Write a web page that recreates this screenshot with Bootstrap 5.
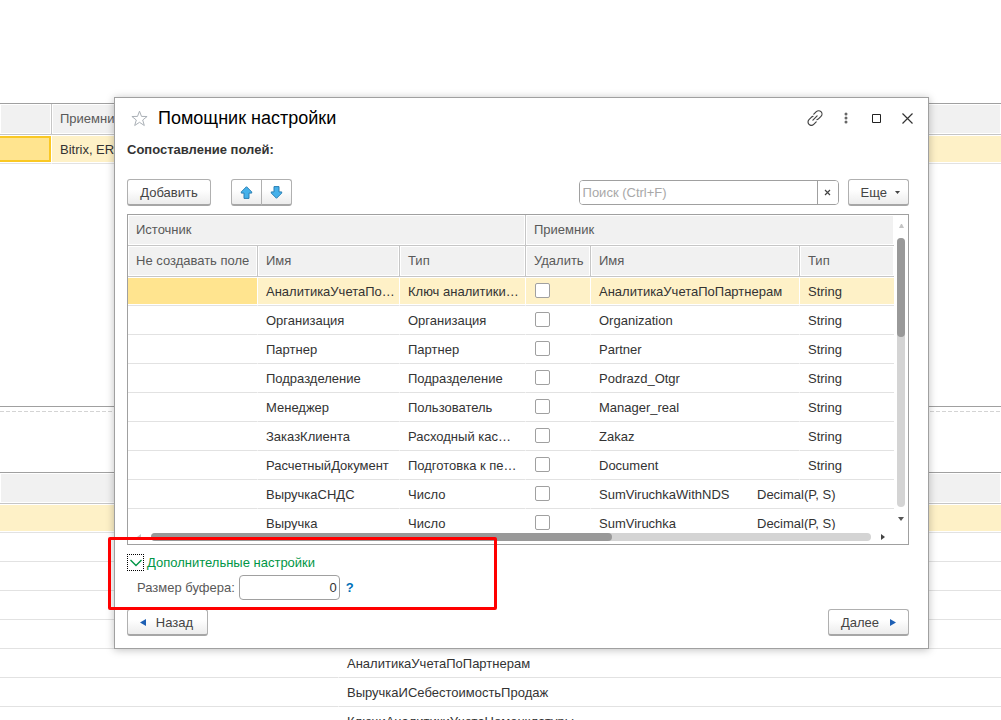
<!DOCTYPE html>
<html lang="ru">
<head>
<meta charset="utf-8">
<meta name="viewport" content="width=device-width, initial-scale=1">
<title>Помощник настройки</title>
<link href="https://cdn.jsdelivr.net/npm/bootstrap@5.3.0/dist/css/bootstrap.min.css" rel="stylesheet">
<style>
  body { font: 13px/16px "Liberation Sans", Arial, sans-serif; color: #333; background: #fff; }
  .desk { padding-top: 103px; }
  .pane { border-top: 1px solid #a0a0a0; }
  .pane-upper { height: 304px; border-bottom: 1px solid #a0a0a0; }
  .splitter { height: 65px; padding-top: 4px; }
  .splitter-line { height: 1px; background: repeating-linear-gradient(90deg, #d4d4d4 0 4px, #fff 4px 6px); }

  /* data grids */
  .grid { width: 100%; table-layout: fixed; border-collapse: separate; border-spacing: 0; }
  .grid th, .grid td { padding: 0 4px 0 8px; white-space: nowrap; overflow: hidden; text-overflow: ellipsis; vertical-align: middle; }
  .grid th { height: 31px; padding-right: 0; font-weight: 400; color: #595959; background: #f1f1f1; border-right: 1px solid #c6c6c6; border-bottom: 1px solid #c6c6c6; box-shadow: inset 0 0 0 1px #fff; }
  .grid td { height: 29px; padding-top: 2px; padding-right: 2px; border-right: 1px solid transparent; border-bottom: 1px solid #e2e2e2; }
  .grid th:last-child, .grid td:last-child { border-right: 0; }
  .grid tr.current td { background: #fef1c7; border-right-color: #fff; box-shadow: inset 0 1px #fff, inset 0 -1px #fff; }
  .grid tr.current td.active-cell { background: #ffe48f; }
  .grid td.framed { padding: 1px 0; }
  .frame { height: 26px; border: 2px solid #fac824; border-left: 0; }
  .name-part { width: 158px; }
  .tick { appearance: none; display: block; width: 15px; height: 15px; margin: 0 0 3px 1px; border: 1px solid #a0a0a0; border-radius: 2px; background: #fff; }

  /* assistant window */
  .dialog { top: 97px; left: 114px; right: 72px; padding: 0 19px 12px 12px; border: 1px solid #a0a0a0; background: #fff; box-shadow: 0 1px 8px rgba(0,0,0,.25); }
  .title-bar { height: 40px; padding-left: 4px; margin-right: -14px; }
  .title-bar h1 { font-size: 18px; line-height: 24px; margin-left: 10px; color: #000; }
  .win-btn { width: 31px; height: 24px; padding: 0; border: 0; background: none; display: flex; align-items: center; justify-content: center; }
  .btn-form { height: 27px; padding: 1px 12px 0; font-size: 13px; line-height: 16px; color: #444; border: 1px solid #b0b0b0; border-bottom: 2px solid #a6a6a6; border-radius: 3px; background: linear-gradient(#fff 40%, #ececec); }
  .btn-form:hover { color: #444; border-color: #a0a0a0; }
  .btn-add { width: 84px; }
  .btn-arrow { width: 31px; padding: 0; }
  .btn-nav { width: 81px; padding: 1px 14px 0 12px; }
  .btn-nav.next { padding: 1px 12px 0; }
  .tools { margin-top: 21px; margin-bottom: 8px; }
  .find { width: 260px; height: 25px; margin-right: 9px; border: 1px solid #a0a0a0; border-radius: 4px; overflow: hidden; }
  .find input { border: 0; padding: 0 3px; min-width: 0; outline: 0; }
  .find input::placeholder { color: #a8a8a8; }
  .find button { width: 21px; padding: 0; border: 0; border-left: 1px solid #a0a0a0; background: #fff; }
  .grid-box { border: 1px solid #a0a0a0; }
  .viewport { height: 315px; overflow: hidden; }
  .v-scroll { width: 14px; padding: 9px 0 9px; }
  .v-track { width: 8px; margin: 10px 0; border-radius: 4px; background: #d4d4d4; }
  .v-thumb { height: 99px; border-radius: 4px; background: #999; }
  .h-scroll { height: 14px; padding: 0 23px 0 9px; }
  .h-track { height: 8px; margin: 0 10px; border-radius: 4px; background: #d4d4d4; }
  .h-thumb { width: 64%; height: 8px; border-radius: 4px; background: #999; }
  .extra { margin-top: 9px; }
  .toggle { padding: 0; border: 0; background: none; color: #009646; }
  .toggle-box { width: 17px; height: 17px; margin-right: 3px; border: 1px dotted #000; display: flex; align-items: center; justify-content: center; }
  .buffer { margin: 4px 0 9px 10px; color: #595959; }
  .buffer input { width: 101px; height: 25px; padding: 0 2px; border: 1px solid #a0a0a0; border-radius: 4px; text-align: right; color: #333; }
  .help { margin-left: 6px; color: #0070b8; font-weight: 700; text-decoration: none; }
  .red-frame { top: 439px; left: -7px; width: 389px; height: 73px; border: 3px solid #f00; border-radius: 2px; pointer-events: none; }
</style>
</head>
<body>
<div class="position-relative vh-100 overflow-hidden">
  <main class="desk">
    <section class="pane pane-upper">
      <table class="grid">
        <colgroup><col style="width:52px"><col></colgroup>
        <thead><tr><th></th><th>Приемник</th></tr></thead>
        <tbody><tr class="current"><td class="framed active-cell"><div class="frame"></div></td><td>Bitrix, ERP</td></tr></tbody>
      </table>
    </section>
    <div class="splitter"><div class="splitter-line"></div></div>
    <section class="pane">
      <table class="grid">
        <colgroup><col style="width:339px"><col></colgroup>
        <thead><tr><th colspan="2"></th></tr></thead>
        <tbody>
          <tr class="current"><td colspan="2"></td></tr>
          <tr><td></td><td></td></tr>
          <tr><td></td><td></td></tr>
          <tr><td></td><td></td></tr>
          <tr><td></td><td></td></tr>
          <tr><td></td><td>АналитикаУчетаПоПартнерам</td></tr>
          <tr><td></td><td>ВыручкаИСебестоимостьПродаж</td></tr>
          <tr><td></td><td>КлючиАналитикиУчетаНоменклатуры</td></tr>
        </tbody>
      </table>
    </section>
  </main>

  <div class="dialog position-absolute" role="dialog" aria-labelledby="dlgTitle">
    <header class="title-bar d-flex align-items-center">
      <svg width="17" height="17" viewBox="0 0 17 17" fill="none" stroke="#aab0b6" aria-hidden="true"><path d="M8.500 1.200l2 5.200 5.600.1-4.400 3.500 1.600 5.500-4.800-3.200-4.800 3.200 1.600-5.500L.9 6.500l5.600-.1z"/></svg>
      <h1 class="mb-0 me-auto fw-normal" id="dlgTitle">Помощник настройки</h1>
      <button type="button" class="win-btn" aria-label="Ссылка"><svg width="16" height="16" viewBox="0 0 16 16" fill="none" stroke="#444" stroke-width="1.200" stroke-linecap="round"><path d="M6.800 4.200l2.500-2.500c1.300-1.300 3.400-1.300 4.700 0s1.300 3.400 0 4.700l-2.300 2.300c-.6.6-1.100.8-1.700.9M9.200 11.800l-2.500 2.500c-1.300 1.300-3.400 1.300-4.700 0s-1.300-3.400 0-4.700l2.300-2.300c.6-.6 1.100-.8 1.700-.9M5.900 10.100l4.200-4.200"/></svg></button>
      <button type="button" class="win-btn" aria-label="Меню"><svg width="4" height="12" viewBox="0 0 4 12" fill="#666"><circle cx="2" cy="2" r="1.500"/><circle cx="2" cy="6" r="1.500"/><circle cx="2" cy="10" r="1.500"/></svg></button>
      <button type="button" class="win-btn" aria-label="Развернуть"><svg width="9" height="9" viewBox="0 0 9 9" fill="none" stroke="#222"><path d="M.5.5h8v8h-8z"/></svg></button>
      <button type="button" class="win-btn" aria-label="Закрыть"><svg width="11" height="11" viewBox="0 0 11 11" stroke="#333" stroke-width="1.200"><path d="M.5.5l10 10M10.500.5l-10 10"/></svg></button>
    </header>
    <div class="fw-bold pt-1">Сопоставление полей:</div>

    <div class="tools d-flex align-items-center">
      <button type="button" class="btn btn-form btn-add">Добавить</button>
      <div class="btn-group ms-3 ps-1">
        <button type="button" class="btn btn-form btn-arrow" aria-label="Вверх"><svg class="d-block ms-2" width="13" height="13" viewBox="0 0 13 13" fill="#45b1ea" stroke="#2a7fb4"><path d="M6.500.7l5.200 5.200v1.200H9v5.300H4V7.100H1.300V5.900z"/></svg></button>
        <button type="button" class="btn btn-form btn-arrow" aria-label="Вниз"><svg class="d-block ms-2" width="13" height="13" viewBox="0 0 13 13" fill="#45b1ea" stroke="#2a7fb4"><path d="M6.500 12.300L1.300 7.100V5.900H4V.6h5v5.300h2.700v1.200z"/></svg></button>
      </div>
      <div class="find d-flex ms-auto">
        <input type="text" class="flex-grow-1" placeholder="Поиск (Ctrl+F)" aria-label="Поиск">
        <button type="button" class="d-flex align-items-center justify-content-center" aria-label="Очистить"><svg width="7" height="7" viewBox="0 0 7 7" stroke="#444" stroke-width="1.200"><path d="M1 1l5 5M6 1L1 6"/></svg></button>
      </div>
      <button type="button" class="btn btn-form d-flex align-items-center ps-2 pe-2"><span class="ms-1">Еще</span><svg class="ms-2" width="5" height="3" viewBox="0 0 5 3" fill="#444" aria-hidden="true"><path d="M0 0h5L2.500 3z"/></svg></button>
    </div>

    <div class="grid-box">
      <div class="d-flex">
        <div class="viewport flex-grow-1">
          <table class="grid">
            <colgroup><col style="width:130px"><col style="width:142px"><col style="width:126px"><col style="width:65px"><col style="width:209px"><col></colgroup>
            <thead>
              <tr><th colspan="3">Источник</th><th colspan="3">Приемник</th></tr>
              <tr><th>Не создавать поле</th><th>Имя</th><th>Тип</th><th>Удалить</th><th>Имя</th><th>Тип</th></tr>
            </thead>
            <tbody>
              <tr class="current"><td class="active-cell"></td><td>АналитикаУчетаПо…</td><td>Ключ аналитики…</td><td><input type="checkbox" class="tick" aria-label="Удалить"></td><td>АналитикаУчетаПоПартнерам</td><td>String</td></tr>
              <tr><td></td><td>Организация</td><td>Организация</td><td><input type="checkbox" class="tick" aria-label="Удалить"></td><td>Organization</td><td>String</td></tr>
              <tr><td></td><td>Партнер</td><td>Партнер</td><td><input type="checkbox" class="tick" aria-label="Удалить"></td><td>Partner</td><td>String</td></tr>
              <tr><td></td><td>Подразделение</td><td>Подразделение</td><td><input type="checkbox" class="tick" aria-label="Удалить"></td><td>Podrazd_Otgr</td><td>String</td></tr>
              <tr><td></td><td>Менеджер</td><td>Пользователь</td><td><input type="checkbox" class="tick" aria-label="Удалить"></td><td>Manager_real</td><td>String</td></tr>
              <tr><td></td><td>ЗаказКлиента</td><td>Расходный кас…</td><td><input type="checkbox" class="tick" aria-label="Удалить"></td><td>Zakaz</td><td>String</td></tr>
              <tr><td></td><td>РасчетныйДокумент</td><td>Подготовка к пе…</td><td><input type="checkbox" class="tick" aria-label="Удалить"></td><td>Document</td><td>String</td></tr>
              <tr><td></td><td>ВыручкаСНДС</td><td>Число</td><td><input type="checkbox" class="tick" aria-label="Удалить"></td><td colspan="2"><div class="d-flex"><span class="name-part">SumViruchkaWithNDS</span><span>Decimal(P, S)</span></div></td></tr>
              <tr><td></td><td>Выручка</td><td>Число</td><td><input type="checkbox" class="tick" aria-label="Удалить"></td><td colspan="2"><div class="d-flex"><span class="name-part">SumViruchka</span><span>Decimal(P, S)</span></div></td></tr>
            </tbody>
          </table>
        </div>
        <div class="v-scroll d-flex flex-column align-items-center flex-shrink-0">
          <svg width="5" height="4" viewBox="0 0 5 4" fill="#c4c4c4" aria-hidden="true"><path d="M0 4h5L3 0H2z"/></svg>
          <div class="v-track flex-grow-1"><div class="v-thumb"></div></div>
          <svg width="6" height="4" viewBox="0 0 6 4" fill="#555" aria-hidden="true"><path d="M0 0h6L3 4z"/></svg>
        </div>
      </div>
      <div class="h-scroll d-flex align-items-center">
        <svg width="4" height="6" viewBox="0 0 4 6" fill="#c4c4c4" aria-hidden="true"><path d="M4 0v6L0 3z"/></svg>
        <div class="h-track flex-grow-1"><div class="h-thumb"></div></div>
        <svg width="4" height="6" viewBox="0 0 4 6" fill="#444" aria-hidden="true"><path d="M0 0v6l4-3z"/></svg>
      </div>
    </div>

    <div class="extra">
      <button type="button" class="toggle d-flex align-items-center"><span class="toggle-box"><svg width="12" height="8" viewBox="0 0 12 8" fill="none" stroke="#009646" stroke-width="1.400"><path d="M.5 1L6 6.500 11.500 1"/></svg></span>Дополнительные настройки</button>
    </div>
    <div class="buffer d-flex align-items-center">
      <label for="buf">Размер буфера:</label>
      <input type="text" id="buf" class="ms-1" value="0">
      <a href="#" class="help">?</a>
    </div>
    <footer class="d-flex justify-content-between">
      <button type="button" class="btn btn-form btn-nav d-flex align-items-center"><svg width="6" height="7" viewBox="0 0 6 7" fill="#1d5fb4" aria-hidden="true"><path d="M6 0v7L0 3.500z"/></svg><span class="ms-auto">Назад</span></button>
      <button type="button" class="btn btn-form btn-nav next d-flex align-items-center"><span class="me-auto">Далее</span><svg width="6" height="7" viewBox="0 0 6 7" fill="#1d5fb4" aria-hidden="true"><path d="M0 0v7l6-3.500z"/></svg></button>
    </footer>
    <div class="red-frame position-absolute"></div>
  </div>
</div>
<script src="https://cdn.jsdelivr.net/npm/bootstrap@5.3.0/dist/js/bootstrap.bundle.min.js"></script>
</body>
</html>
